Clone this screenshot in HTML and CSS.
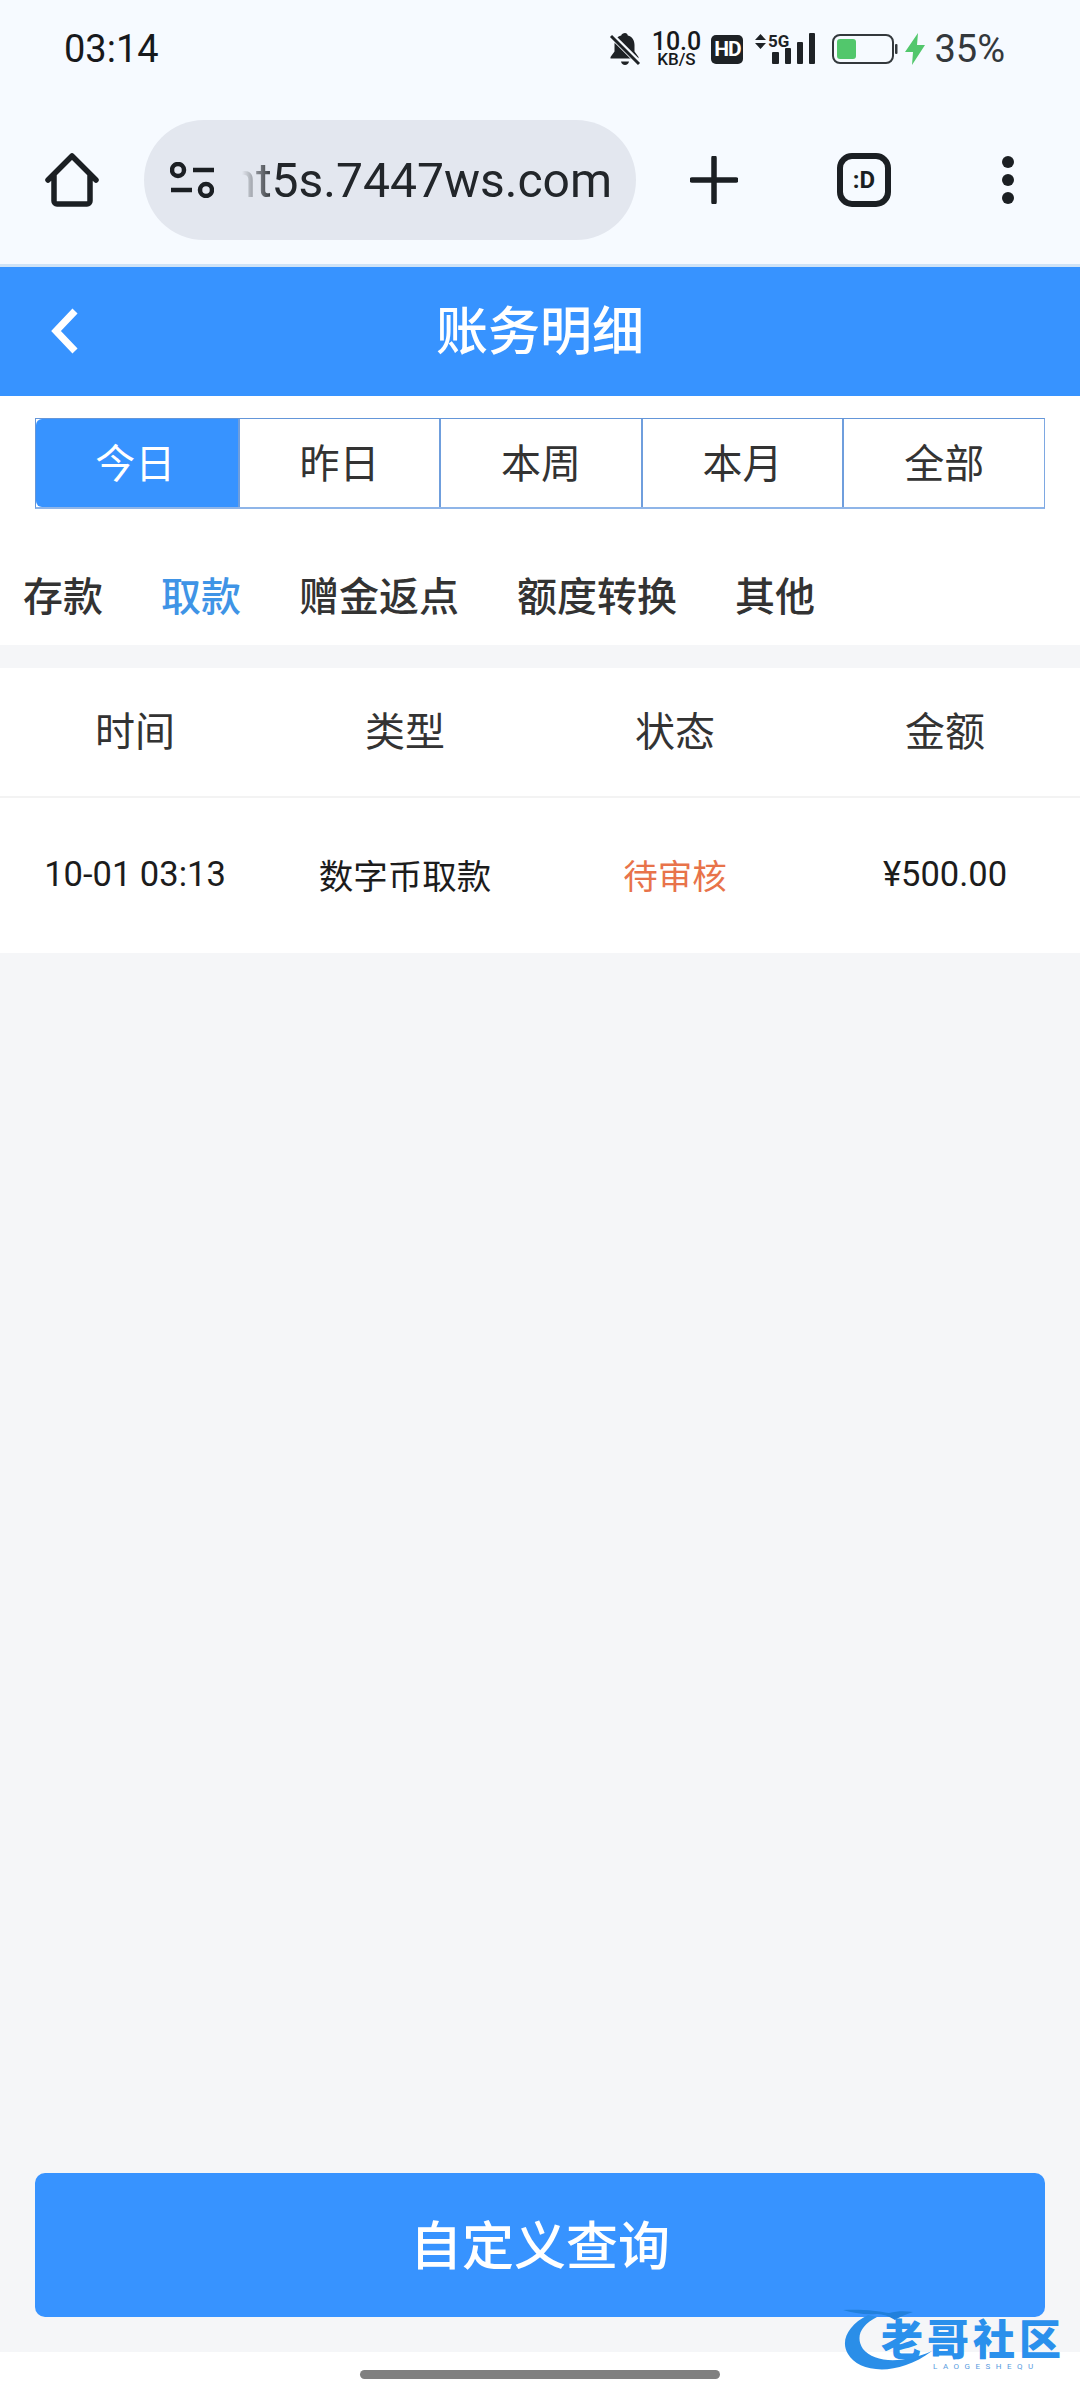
FILE: index.html
```html
<!DOCTYPE html>
<html lang="zh">
<head>
  <meta charset="UTF-8">
  <meta name="viewport" content="width=device-width, initial-scale=1.0">
  <title>账务明细</title>
  <link rel="stylesheet" href="styles.css">
</head>
<body>

  <div class="browser">
    <div class="status-bar">
      <span class="clock">03:14</span>
      <div class="status-icons">
        <svg class="ic-bell" width="32" height="34" viewBox="0 0 32 34">
          <path d="M16 1c1.6 0 2.6 1 2.8 2.6 4.6 1.200 6.700 5 6.700 9.400v6.500l4 5.500v1.500H1.500V25l4-5.500V13c0-4.400 2.100-8.200 6.700-9.400C12.400 2 14.400 1 16 1z" fill="#1e2226"/>
          <path d="M12 29.500h8c-.4 2-2 3.500-4 3.500s-3.600-1.500-4-3.500z" fill="#1e2226"/>
          <path d="M2 3l28 28" stroke="#f6faff" stroke-width="6"/>
          <path d="M2 4l28 28" stroke="#1e2226" stroke-width="3"/>
        </svg>
        <div class="speed"><span class="speed-num">10.0</span><span class="speed-unit">KB/S</span></div>
        <span class="hd">HD</span>
        <svg class="ic-signal" width="60" height="32" viewBox="0 0 60 32">
          <path d="M0 7l5.500-6 5.500 6zM0 10l5.500 6 5.500-6z" fill="#1e2226"/>
          <text class="five-g" x="13" y="14">5G</text>
          <rect x="17" y="19" width="7" height="12" rx="1" fill="#1e2226"/>
          <rect x="30" y="15" width="6" height="16" rx="1" fill="#1e2226"/>
          <rect x="42" y="9" width="6" height="22" rx="1" fill="#1e2226"/>
          <rect x="54" y="0" width="6" height="31" rx="1" fill="#1e2226"/>
        </svg>
        <svg class="ic-battery" width="66" height="30" viewBox="0 0 66 30">
          <rect x="1" y="1" width="60" height="28" rx="7" fill="none" stroke="#33383c" stroke-width="2"/>
          <rect x="5" y="5" width="19" height="20" rx="3" fill="#52c76c"/>
          <rect x="63" y="10" width="2.500" height="10" rx="1" fill="#33383c"/>
        </svg>
        <svg class="ic-bolt" width="20" height="32" viewBox="0 0 20 32">
          <path d="M13 0L0 19h8l-1 13 13-20h-8z" fill="#52c76c"/>
        </svg>
        <span class="battery-pct">35%</span>
      </div>
    </div>

    <div class="toolbar">
      <svg class="ic-home" width="54" height="54" viewBox="0 0 54 54">
        <path d="M3 27L27 3l24 24M9 22v26a3 3 0 0 0 3 3h30a3 3 0 0 0 3-3V22" fill="none" stroke="#1b1f23" stroke-width="5.500" stroke-linecap="round" stroke-linejoin="round"/>
      </svg>
      <div class="url-pill">
        <svg class="ic-tune" width="44" height="36" viewBox="0 0 44 36">
          <circle cx="8" cy="8" r="6" fill="none" stroke="#1b1f23" stroke-width="4.500"/>
          <path d="M23 8h21M1 28h21" stroke="#1b1f23" stroke-width="4.500"/>
          <circle cx="36" cy="28" r="6" fill="none" stroke="#1b1f23" stroke-width="4.500"/>
        </svg>
        <div class="url-clip"><span class="url-text">nt5s.7447ws.com</span></div>
      </div>
      <svg class="ic-plus" width="48" height="48" viewBox="0 0 48 48">
        <path d="M24 2v44M2 24h44" stroke="#1b1f23" stroke-width="5.500" stroke-linecap="round"/>
      </svg>
      <div class="tab-count">:D</div>
      <svg class="ic-more" width="12" height="48" viewBox="0 0 12 48">
        <circle cx="6" cy="6" r="6" fill="#1b1f23"/>
        <circle cx="6" cy="24" r="6" fill="#1b1f23"/>
        <circle cx="6" cy="42" r="6" fill="#1b1f23"/>
      </svg>
    </div>
  </div>

  <div class="page">
    <div class="header">
      <svg class="back" width="30" height="46" viewBox="0 0 30 46">
        <path d="M25 3L6 23l19 20" fill="none" stroke="#fff" stroke-width="7"/>
      </svg>
      <h1>账务明细</h1>
    </div>

    <div class="filters">
      <div class="segments">
        <div class="segment active">今日</div>
        <div class="segment">昨日</div>
        <div class="segment">本周</div>
        <div class="segment">本月</div>
        <div class="segment">全部</div>
      </div>
      <div class="tabs">
        <span class="tab">存款</span>
        <span class="tab current">取款</span>
        <span class="tab">赠金返点</span>
        <span class="tab">额度转换</span>
        <span class="tab">其他</span>
      </div>
    </div>

    <div class="records">
      <div class="row head">
        <div>时间</div>
        <div>类型</div>
        <div>状态</div>
        <div>金额</div>
      </div>
      <div class="row item">
        <div>10-01 03:13</div>
        <div>数字币取款</div>
        <div class="pending">待审核</div>
        <div>¥500.00</div>
      </div>
    </div>

    <div class="spacer"></div>

    <div class="query-wrap">
      <button class="query-btn">自定义查询</button>
    </div>
  </div>

  <div class="nav-bar"><div class="home-pill"></div></div>

  <div class="watermark">
    <svg class="wm-swirl" width="110" height="68" viewBox="0 0 110 68">
      <path d="M25 8C5 18-3 34 5 47c10 18 48 24 84-3-29 13-58 12-69-2-8-12-2-24 14-32z" fill="#2a8ee8"/>
      <path d="M0 3c20-1 34 1 46 3 8-2 16-2 24-1-8 3-14 5-18 8-6-4-12-6-18-6C22 8 10 6 0 3z" fill="#2180dc"/>
    </svg>
    <span class="wm-name">老哥社区</span>
    <span class="wm-sub">LAOGESHEQU</span>
  </div>

</body>
</html>
```

FILE: styles.css
```css
* { box-sizing: border-box; }
html, body { margin: 0; padding: 0; }
body {
  width: 1080px; height: 2400px; overflow: hidden; position: relative;
  display: flex; flex-direction: column; background: #fff;
  font-family: Roboto, "Noto Sans CJK SC", sans-serif; color: #333;
}

/* browser chrome */
.browser { height: 267px; flex-shrink: 0; background: #f6faff; border-bottom: 3px solid #cfe3f6; }
.status-bar {
  height: 120px; padding: 0 75px 22px 64px;
  display: flex; justify-content: space-between; align-items: center;
}
.clock { font-size: 38px; color: #17191c; }
.status-icons { display: flex; align-items: center; }
.ic-bell { margin-right: 11px; }
.speed { display: flex; flex-direction: column; align-items: center; width: 48px; color: #17191c; }
.speed-num { font-size: 25px; line-height: 20px; font-weight: 500; }
.speed-unit { font-size: 17px; line-height: 15px; font-weight: 500; }
.hd {
  width: 32px; height: 29px; margin-left: 11px; border-radius: 5px;
  background: #1e2226; color: #fff; font-size: 21px; font-weight: 700;
  display: flex; align-items: center; justify-content: center; letter-spacing: -1px;
}
.ic-signal { margin-left: 12px; overflow: visible; }
.five-g { font-family: Roboto, sans-serif; font-size: 17px; font-weight: 700; fill: #1e2226; }
.ic-battery { margin-left: 17px; }
.ic-bolt { margin-left: 7px; }
.battery-pct { margin-left: 9px; font-size: 38px; color: #33383c; }

.toolbar { height: 120px; padding: 0 66px 0 45px; display: flex; align-items: center; }
.url-pill {
  width: 492px; height: 120px; margin-left: 45px; padding: 0 24px 0 26px;
  background: #e3e7ef; border-radius: 60px;
  display: flex; align-items: center;
}
.url-clip {
  flex: 1; margin-left: 28px; overflow: hidden;
  display: flex; justify-content: flex-end;
  -webkit-mask-image: linear-gradient(to right, transparent 0, #000 32px);
  mask-image: linear-gradient(to right, transparent 0, #000 32px);
}
.url-text { font-size: 48px; color: #22262a; white-space: nowrap; }
.ic-plus { margin-left: 54px; }
.tab-count {
  width: 54px; height: 54px; margin-left: 99px;
  border: 6px solid #1b1f23; border-radius: 15px;
  display: flex; align-items: center; justify-content: center;
  font-size: 24px; font-weight: 700; color: #1b1f23;
}
.ic-more { margin-left: 111px; }

/* page */
.page { flex: 1; display: flex; flex-direction: column; background: #f5f6f8; }
.header {
  height: 129px; padding-bottom: 8px; background: #3793ff; position: relative;
  display: flex; align-items: center; justify-content: center;
}
.back { position: absolute; left: 50px; top: 41px; }
.header h1 { margin: 0; font-size: 52px; font-weight: 500; color: #fff; }

.filters { height: 249px; padding-top: 22px; background: #fff; }
.segments {
  display: grid; grid-template-columns: repeat(5, 1fr);
  height: 91px; margin: 0 35px;
  border: 1px solid #6496d9; border-bottom: 2px solid #8fb5e8; border-right-color: #7ea8e2;
}
.segment {
  display: flex; align-items: center; justify-content: center; padding-bottom: 4px;
  font-size: 40px; color: #333; border-left: 2px solid #6f9edd;
}
.segment:first-child { border-left: none; }
.segment.active { padding-right: 3px; background: #3793ff; color: #fff; border-radius: 6px 0 0 6px; }
.tabs { display: flex; gap: 58px; padding: 41px 0 0 23px; }
.tab { font-size: 40px; line-height: 96px; font-weight: 500; color: #333; }
.tab.current { color: #3f94e6; }

.records { margin-top: 23px; background: #fff; }
.row { display: grid; grid-template-columns: repeat(4, 1fr); text-align: center; align-items: center; }
.row.head { height: 130px; padding-bottom: 6px; font-size: 40px; color: #333; border-bottom: 2px solid #f3f3f3; }
.row.item { height: 155px; padding-bottom: 4px; font-size: 34.500px; color: #1c1c1c; }
.pending { color: #e8734a; }

.spacer { flex: 1; }
.query-wrap { padding: 0 35px 35px; }
.query-btn {
  display: block; width: 100%; height: 144px; padding: 0 0 6px; border: none; border-radius: 10px;
  background: #3793ff; color: #fff; font-family: inherit; font-size: 52px; font-weight: 500;
}

.nav-bar { height: 48px; flex-shrink: 0; background: #fff; padding-top: 18px; }
.home-pill { width: 360px; height: 9px; margin: 0 auto; border-radius: 5px; background: #808080; }

/* watermark over the bottom corner */
.watermark { position: absolute; left: 843px; top: 2307px; width: 220px; height: 68px; }
.wm-swirl { position: absolute; left: 0; top: 0; }
.wm-name {
  position: absolute; left: 38px; top: 11px; white-space: nowrap;
  font-size: 42px; line-height: 46px; font-weight: 900; letter-spacing: 4px; color: #2a90ec;
}
.wm-sub {
  position: absolute; left: 90px; top: 56px; white-space: nowrap;
  font-size: 8px; line-height: 8px; letter-spacing: 5.500px; color: #5a9ce0;
}
```
